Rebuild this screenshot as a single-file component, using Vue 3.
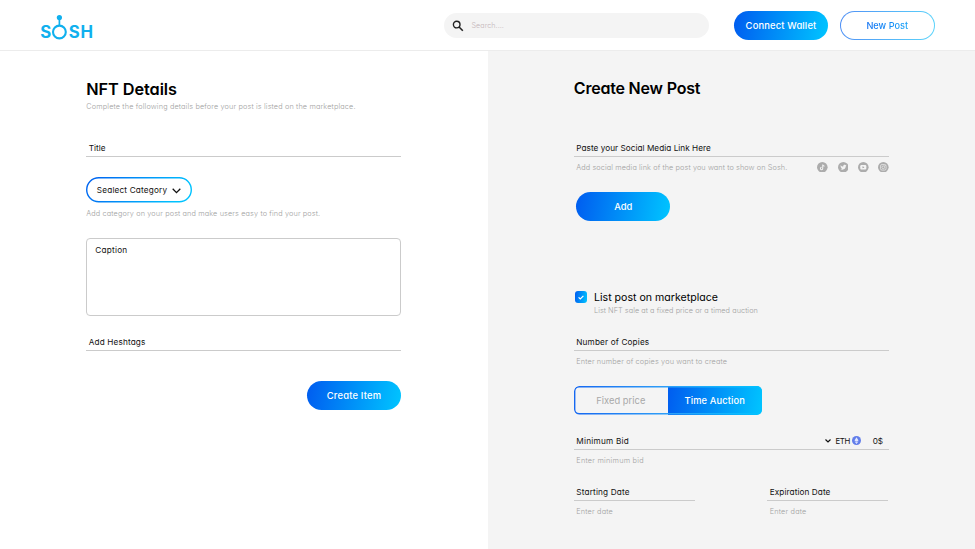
<script setup>
const socials = ['tiktok', 'twitter', 'youtube', 'instagram']
</script>

<template>
  <div class="page">
    <header class="topbar">
      <svg class="logo" width="54" height="28" viewBox="0 0 54 28" role="img" aria-label="SOSH">
        <g class="logo-text">
          <text x="0.2" y="25.4">S</text>
          <text x="28.8" y="25.4">S</text>
          <text x="40.5" y="25.4">H</text>
        </g>
        <circle cx="19.4" cy="19" r="6.4" fill="none" stroke="#10b0ee" stroke-width="2.1" />
        <path d="M19.4 5v8" stroke="#10b0ee" stroke-width="1.7" />
        <circle cx="19.4" cy="4.6" r="2.6" fill="#10b0ee" />
      </svg>
      <div class="search">
        <svg width="12" height="12" viewBox="0 0 12 12" fill="none" stroke="#222">
          <circle cx="4.7" cy="4.6" r="3.3" stroke-width="1.4" />
          <path d="M7.1 7l3.7 3.7" stroke-width="1.6" />
        </svg>
        <span class="search-text">Search....</span>
      </div>
      <button class="btn connect"><span>Connect Wallet</span></button>
      <button class="btn-outline"><span>New Post</span></button>
    </header>

    <main class="columns">
      <section class="left">
        <h1 class="nft">NFT Details</h1>
        <p class="hint intro">Complete the following details before your post is listed on the marketplace.</p>
        <div class="field title-field">Title</div>
        <button class="category">
          <svg class="outline" width="106" height="25.5" fill="none">
            <defs>
              <linearGradient id="pill-stroke" x1="0" x2="1" y1="0" y2="0.2">
                <stop offset="0" stop-color="#005ff0" /><stop offset="1" stop-color="#00c2ff" />
              </linearGradient>
            </defs>
            <rect x="0.7" y="0.7" width="104.6" height="24.1" rx="12" stroke="url(#pill-stroke)" stroke-width="1.4" />
          </svg>
          <span>Sealect Category</span>
          <svg class="chevron" width="9" height="6" viewBox="0 0 9 6" fill="none" stroke="#111" stroke-width="1.3"><path d="M.7 .8l3.8 3.8L8.3 .8" /></svg>
        </button>
        <p class="hint category-hint">Add category on your post and make users easy to find your post.</p>
        <div class="caption">Caption</div>
        <div class="field hashtags">Add Heshtags</div>
        <button class="btn create"><span>Create Item</span></button>
      </section>

      <section class="right">
        <h1 class="cnp">Create New Post</h1>
        <div class="field link-field">Paste your Social Media Link Here</div>
        <div class="link-row">
          <p class="hint link-hint">Add social media link of the post you want to show on Sosh.</p>
          <div class="socials">
            <svg v-for="s in socials" :key="s" width="10.6" height="10.6" viewBox="0 0 20 20">
              <circle cx="10" cy="10" r="10" fill="#acacac" />
              <path v-if="s === 'tiktok'" d="M10.8 4.5v7.8a2.2 2.2 0 1 1-2.2-2.2M10.8 4.8c.3 1.9 1.5 2.9 3.4 3" fill="none" stroke="#f4f4f4" stroke-width="1.9" />
              <path v-else-if="s === 'twitter'" d="M4.8 6c1.5 1.6 3 2.3 5.1 2.4-.4-3 2.7-4.2 4.3-2.5l1.5-.5-.7 1.5.9-.1-1.2 1.3c0 5-5.2 7.9-10.1 5.4 1.5 0 2.4-.3 3.2-1-1.3-.2-1.9-.8-2.2-1.7h.9c-1.2-.5-1.8-1.3-1.8-2.5l.9.2C4.6 7.8 4.4 7 4.8 6z" fill="#f4f4f4" />
              <template v-else-if="s === 'youtube'">
                <rect x="4.3" y="5.8" width="11.4" height="8.4" rx="2" fill="#f4f4f4" />
                <path d="M8.6 8l3.6 2-3.6 2z" fill="#999" />
              </template>
              <g v-else fill="none" stroke="#f4f4f4" stroke-width="1.2">
                <rect x="4.7" y="4.7" width="10.6" height="10.6" rx="3" />
                <circle cx="10" cy="10" r="2.6" />
                <circle cx="13.2" cy="6.8" r=".3" />
              </g>
            </svg>
          </div>
        </div>
        <button class="btn add"><span>Add</span></button>

        <div class="market">
          <span class="checkbox">
            <svg width="6" height="5" viewBox="0 0 6 5" fill="none" stroke="#fff" stroke-width="1.2"><path d="M.6 2.3l1.7 1.7L5.4 .8" /></svg>
          </span>
          <div>
            <p class="market-title">List post on marketplace</p>
            <p class="hint market-hint">List NFT sale at a fixed price or a timed auction</p>
          </div>
        </div>

        <div class="field copies">Number of Copies</div>
        <p class="hint sub h-copies">Enter number of copies you want to create</p>

        <div class="toggle">
          <svg class="outline" width="188" height="28.5" fill="none">
            <defs>
              <linearGradient id="toggle-stroke" x1="0" x2="1" y1="0" y2="0">
                <stop offset="0" stop-color="#1668f1" /><stop offset="0.5" stop-color="#2fa0f8" /><stop offset="1" stop-color="#00c2ff" />
              </linearGradient>
            </defs>
            <rect x="0.7" y="0.7" width="186.6" height="27.1" rx="4.500" stroke="url(#toggle-stroke)" stroke-width="1.4" />
          </svg>
          <span class="fixed"><span>Fixed price</span></span>
          <span class="timed"><span>Time Auction</span></span>
        </div>

        <div class="field bid">
          <span>Minimum Bid</span>
          <span class="currency">
            <svg width="6" height="4" viewBox="0 0 6 4" fill="none" stroke="#111" stroke-width="1.2"><path d="M.5 .5L3 3 5.5 .5" /></svg>
            <span class="eth">ETH</span>
            <svg class="coin" width="9" height="9" viewBox="0 0 18 18"><circle cx="9" cy="9" r="9" fill="#627eea" /><path d="M9 2.5l4 6.7-4 2.3-4-2.3zM5 10.3l4 2.3 4-2.3-4 5.5z" fill="#e4e9ff" /></svg>
            <span class="amount">0$</span>
          </span>
        </div>
        <p class="hint sub h-bid">Enter minimum bid</p>

        <div class="dates">
          <div>
            <div class="field start">Starting Date</div>
            <p class="hint sub h-date">Enter date</p>
          </div>
          <div>
            <div class="field expire">Expiration Date</div>
            <p class="hint sub h-date">Enter date</p>
          </div>
        </div>
      </section>
    </main>
  </div>
</template>

<style>
body { margin: 0; background: #fff; }
</style>

<style scoped>
.page {
  --grad: linear-gradient(100deg, #005ff0 3%, #00c2ff 97%);
  width: 975px;
  height: 549px;
  overflow: hidden;
  font-family: Inter, "Open Sans", sans-serif;
  font-feature-settings: "cv11";
  color: #111;
  white-space: nowrap;
}
*, *::before { box-sizing: border-box; }
h1, p { margin: 0; }
button { border: 0; padding: 0; font: inherit; font-feature-settings: inherit; }

.topbar {
  display: flex;
  align-items: flex-start;
  height: 51px;
  padding-left: 40px;
  border-bottom: 1px solid #ececec;
}
.logo { margin-top: 13px; flex: none; }
.logo-text { font: 650 16.8px Inter, sans-serif; fill: #10b0ee; }
.search {
  display: flex;
  align-items: center;
  width: 265px;
  height: 25px;
  margin: 13px 0 0 350px;
  padding-left: 8px;
  border-radius: 13px;
  background: #f4f4f4;
}
.search-text { margin-left: 7.5px; font-size: 7.2px; font-weight: 300; letter-spacing: 0.05px; color: #c4b6ba; }
.btn {
  display: flex;
  align-items: center;
  justify-content: center;
  width: 94px;
  height: 28.5px;
  border-radius: 15px;
  background: var(--grad);
  color: #fff;
  font-size: 9.4px;
  font-weight: 500;
}
.connect { margin: 11px 12px 0 25px; letter-spacing: 0.16px; }
.btn-outline {
  width: 94.5px;
  height: 28.5px;
  margin-top: 11px;
  border: 1px solid transparent;
  border-radius: 15px;
  background: linear-gradient(#fff, #fff) padding-box, linear-gradient(100deg, #4f8ff5, #5cd5fb) border-box;
  font-size: 9.2px;
  font-weight: 500;
}
.btn-outline span { background: linear-gradient(100deg, #0a6cf2, #1aa5f8); background-clip: text; color: transparent; }

.columns { display: grid; grid-template-columns: 487.5px 487.5px; height: 497.5px; }
.left { padding: 26px 0 0 86.3px; }
.right { padding: 25px 0 0 86.3px; background: #f4f4f4; }
h1 { height: 24px; line-height: 24px; font-size: 16.3px; font-weight: 600; color: #000; }
.nft { letter-spacing: -0.07px; }
.cnp { font-size: 16px; letter-spacing: -0.2px; }
.hint { height: 10px; line-height: 10px; font-size: 7.3px; font-weight: 300; color: #a2a2a2; }
.intro { margin-top: 1px; letter-spacing: 0.15px; }
.field {
  display: flex;
  align-items: center;
  width: 315px;
  height: 17px;
  padding-left: 2.5px;
  border-bottom: 1px solid #cbcbcb;
  font-size: 8.2px;
}
.title-field { margin-top: 28px; }
.category {
  position: relative;
  display: flex;
  align-items: center;
  width: 106px;
  height: 25.5px;
  margin-top: 20px;
  padding-left: 10.5px;
  border-radius: 13px;
  background: #fff;
  font-size: 8.2px;
  letter-spacing: 0.18px;
  color: #111;
}
.outline { position: absolute; top: 0; left: 0; }
.chevron { margin: 2px 0 0 4.5px; }
.category-hint { margin-top: 6px; letter-spacing: 0.137px; }
.caption {
  width: 315px;
  height: 78px;
  margin-top: 19.5px;
  padding: 6px 8px;
  border: 1px solid #cbcbcb;
  border-radius: 4px;
  font-size: 8.2px;
  line-height: 11px;
  letter-spacing: 0.25px;
}
.hashtags { margin-top: 18px; letter-spacing: 0.14px; }
.create { margin: 30px 0 0 220.7px; letter-spacing: 0.2px; }

.link-field { margin-top: 40px; letter-spacing: 0.04px; }
.link-row {
  display: flex;
  justify-content: space-between;
  width: 315px;
  height: 11px;
  margin-top: 4.5px;
  padding-left: 2.5px;
}
.link-hint { margin-top: 1px; letter-spacing: 0.11px; }
.socials { display: flex; gap: 9.7px; }
.add { margin: 19.8px 0 0 2.5px; }
.market { display: flex; margin-top: 68.2px; padding-left: 1px; }
.checkbox {
  display: flex;
  align-items: center;
  justify-content: center;
  width: 12.5px;
  height: 12.5px;
  margin: 2px 6.7px 0 0;
  border-radius: 3px;
  background: var(--grad);
}
.market-title { height: 16px; line-height: 17px; font-size: 10.6px; color: #000; }
.market-hint { margin-top: 1px; letter-spacing: 0.06px; }
.copies { margin-top: 18px; letter-spacing: 0.15px; }
.sub { margin-top: 6px; padding-left: 2.5px; }
.h-copies { letter-spacing: 0.15px; }
.toggle {
  position: relative;
  display: grid;
  grid-template-columns: 94px 94px;
  width: 188px;
  height: 28.5px;
  margin-top: 19.3px;
  border-radius: 5px;
  overflow: hidden;
  font-size: 9.3px;
}
.toggle > span { display: flex; align-items: center; justify-content: center; }
.fixed { color: #a8a8a8; letter-spacing: 0.05px; }
.timed { background: var(--grad); color: #fff; font-weight: 500; letter-spacing: 0.14px; }
.bid { margin-top: 18.2px; letter-spacing: 0.25px; }
.currency { display: flex; align-items: center; margin-left: auto; padding-right: 5.7px; letter-spacing: 0; }
.eth { margin-left: 4px; font-size: 7.8px; letter-spacing: -0.3px; }
.coin { margin: 0 12px 0 1.6px; }
.h-bid { letter-spacing: 0.25px; }
.dates { display: flex; gap: 72.3px; margin-top: 18px; }
.dates .field { width: 121.2px; }
.start { letter-spacing: 0.17px; }
.expire { letter-spacing: 0.09px; }
.h-date { letter-spacing: 0.19px; }
</style>
